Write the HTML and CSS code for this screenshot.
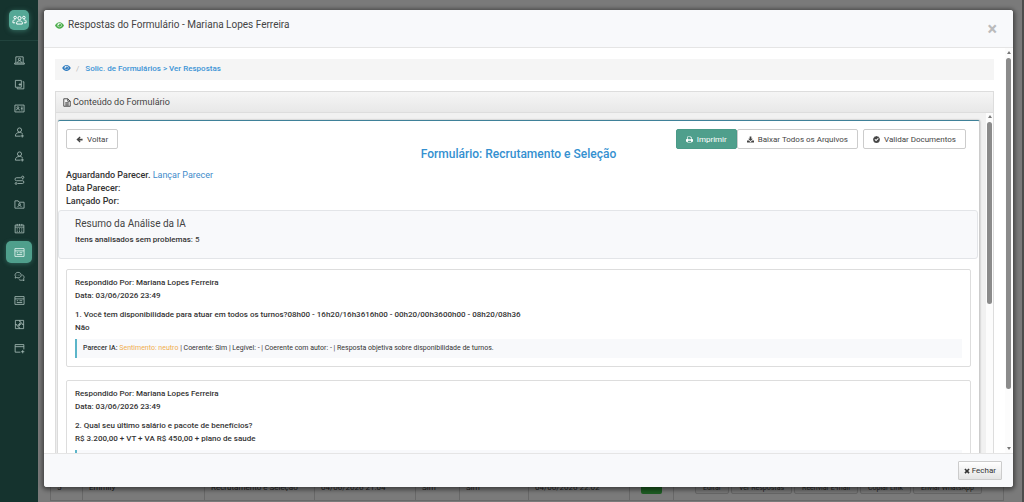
FILE: index.html
```
<!DOCTYPE html>
<html lang="pt-BR">
<head>
  <meta charset="UTF-8">
  <title>Respostas do Formulário</title>
  <link rel="stylesheet" href="styles.css">
</head>
<body>

<!-- ICON SPRITE -->
<svg class="sprite" aria-hidden="true">
  <symbol id="i-team" viewBox="0 0 24 16"><circle cx="12" cy="5" r="2.6"/><circle cx="5" cy="4" r="2"/><circle cx="19" cy="4" r="2"/><path d="M7.5 14.5v-2.2c0-1.800 1.500-2.800 4.500-2.800s4.500 1 4.500 2.800v2.200zM1.500 12.500v-2.500c0-1.500 1.300-2.300 3.800-2.300M22.500 12.500v-2.500c0-1.500-1.300-2.300-3.800-2.300M1.500 12.500h3.500M19 12.500h3.500"/></symbol>
  <symbol id="i-laptop" viewBox="0 0 24 24"><path d="M4 17V4h16v13M1.500 17.500h21V20h-21zM8 17c0-3 1.500-4.500 4-4.500s4 1.500 4 4.500"/><circle cx="12" cy="9.500" r="2.500"/></symbol>
  <symbol id="i-copy" viewBox="0 0 24 24"><path d="M3 3h13v15H3zM19 6h2.500v15.500H7V19M13 9v6M10 12h6"/></symbol>
  <symbol id="i-idcard" viewBox="0 0 24 24"><path d="M2 4.500h20v15H2zM5 16c0-2 1-3 3.500-3s3.500 1 3.500 3M15 9h4M15 12h4M15 15h4"/><circle cx="8.500" cy="10" r="2"/></symbol>
  <symbol id="i-useradd" viewBox="0 0 24 24"><circle cx="12" cy="6.500" r="4.500"/><path d="M14 20H3c0-5 3-8 9-8 3 0 5.500.8 7 3M18 16v7M14.500 19.500h7"/></symbol>
  <symbol id="i-route" viewBox="0 0 24 24"><circle cx="19" cy="5" r="2.500"/><circle cx="4.500" cy="18.500" r="2"/><path d="M15 6H5.500a3 3 0 0 0 0 6.500h13a3 3 0 0 1 0 6H8M19 8v2"/></symbol>
  <symbol id="i-folder" viewBox="0 0 24 24"><path d="M2 20V4h7l2 3h11v13zM8.500 17.500c0-2 1-3.500 3.500-3.500s3.500 1.500 3.500 3.500"/><circle cx="12" cy="11.500" r="2"/></symbol>
  <symbol id="i-calendar" viewBox="0 0 24 24"><path d="M2.500 4.500h19v17h-19zM2.500 9h19M7 2v4M12 2v4M17 2v4M6 12.500h2M11 12.500h2M16 12.500h2M6 15.500h2M11 15.500h2M16 15.500h2M6 18.500h2M11 18.500h2M16 18.500h2"/></symbol>
  <symbol id="i-form" viewBox="0 0 24 24"><path d="M2 3.500h20v17H2zM2 8.500h20M6 12.500h3M12 12.500h6M6 16.500h12"/></symbol>
  <symbol id="i-chat" viewBox="0 0 24 24"><path d="M2.500 15.500l.8-3.300C.8 8 3.500 3 9 3c9 0 9 12 0 12-1.300 0-2.400-.3-3.300-.8zM18 8.500c4 1.500 5 5.500 3 8.500l.8 4-3.800-1.200c-3 1-6 0-7.500-2M6 9h1M9 9h1M12 9h1"/></symbol>
  <symbol id="i-puzzle" viewBox="0 0 24 24"><path d="M3 3h18v18H3zM12 3v2.500c4-1.500 4 5 0 3.500v3H9.500c1.500 4-5 4-3.500 0H3M12 21v-2.500c-4 1.500-4-5 0-3.500v-3h2.500c-1.500-4 5-4 3.500 0h3"/></symbol>
  <symbol id="i-formadd" viewBox="0 0 24 24"><path d="M14 20H2.500V3.500h19V14M2.500 8h19M19 15.500v7M15.500 19h7"/></symbol>
  <symbol id="i-eye" viewBox="0 0 20 14"><path fill-rule="evenodd" d="M10 0c4.500 0 8 3.300 10 7-2 3.700-5.500 7-10 7S2 10.700 0 7C2 3.300 5.500 0 10 0zm0 1.500a4.800 4.800 0 1 0 0 9.600 4.800 4.800 0 0 0 0-9.600zM10 2.800a3.600 3.600 0 1 1-3.600 3.600c1.500.8 3.600 0 3.600-3.600z"/></symbol>
  <symbol id="i-file" viewBox="0 0 16 18"><path d="M1.500 1.500h8l5 5v10h-13zM9.500 1.500v5h5M4.500 9.500h7M4.500 12h7M4.500 14.300h7"/></symbol>
  <symbol id="i-left" viewBox="0 0 16 16"><path d="M8.500 1L10.500 3 7.800 6H15v4H7.800l2.700 3-2 2L1 8z"/></symbol>
  <symbol id="i-print" viewBox="0 0 16 16"><path fill-rule="evenodd" d="M3 1h8l2 2v4h1c1 0 2 1 2 2v4h-3v2H3v-2H0V9c0-1 1-2 2-2h1zm1.500 1.500v5h7V4H10V2.500zM4.500 11v2.700h7V11z"/></symbol>
  <symbol id="i-download" viewBox="0 0 16 16"><path d="M6 1h4v5h3.500L8 11.500 2.500 6H6zM0 10.500h4.500L8 14l3.500-3.500H16V15H0z"/></symbol>
  <symbol id="i-check" viewBox="0 0 16 16"><path fill-rule="evenodd" d="M8 0l2 1.200 2.300-.2 1 2.200 2 1.100-.2 2.300L16 8l-.9 1.800.2 2.300-2 1.100-1 2.200-2.300-.2L8 16l-2-.8-2.300.2-1-2.200-2-1.100.2-2.300L0 8l.9-1.400-.2-2.300 2-1.100 1-2.200L6 1.200zM3.500 8.300L7 12l6-6-1.600-1.600L7 8.800 5 6.800z"/></symbol>
  <symbol id="i-times" viewBox="0 0 16 16"><path d="M4 1l4 4 4-4 3 3-4 4 4 4-3 3-4-4-4 4-3-3 4-4-4-4z"/></symbol>
</svg>

<!-- SIDEBAR -->
<nav class="sidebar">
  <a class="brand" href="#" aria-label="Início"><svg><use href="#i-team"/></svg></a>
  <ul class="menu">
    <li><a href="#" aria-label="Portal"><svg><use href="#i-laptop"/></svg></a></li>
    <li><a href="#" aria-label="Cadastros"><svg><use href="#i-copy"/></svg></a></li>
    <li><a href="#" aria-label="Colaboradores"><svg><use href="#i-idcard"/></svg></a></li>
    <li><a href="#" aria-label="Admissão"><svg><use href="#i-useradd"/></svg></a></li>
    <li><a href="#" aria-label="Candidatos"><svg><use href="#i-useradd"/></svg></a></li>
    <li><a href="#" aria-label="Trajetos"><svg><use href="#i-route"/></svg></a></li>
    <li><a href="#" aria-label="Pastas"><svg><use href="#i-folder"/></svg></a></li>
    <li><a href="#" aria-label="Agenda"><svg><use href="#i-calendar"/></svg></a></li>
    <li><a class="active" href="#" aria-label="Formulários"><svg><use href="#i-form"/></svg></a></li>
    <li><a href="#" aria-label="Mensagens"><svg><use href="#i-chat"/></svg></a></li>
    <li><a href="#" aria-label="Modelos"><svg><use href="#i-form"/></svg></a></li>
    <li><a href="#" aria-label="Integrações"><svg><use href="#i-puzzle"/></svg></a></li>
    <li><a href="#" aria-label="Novo formulário"><svg><use href="#i-formadd"/></svg></a></li>
  </ul>
</nav>

<!-- PAGE BEHIND THE MODAL -->
<main class="page">
  <table class="requests">
    <colgroup>
      <col class="c-id"><col class="c-name"><col class="c-form"><col class="c-date"><col class="c-flag"><col class="c-sent"><col class="c-date"><col class="c-flag"><col>
    </colgroup>
    <tr>
      <td>5</td>
      <td>Emmily</td>
      <td>Recrutamento e Seleção</td>
      <td>04/06/2026 21:04</td>
      <td>Sim</td>
      <td>Sim</td>
      <td>04/06/2026 22:02</td>
      <td><span class="tag">Sim</span></td>
      <td class="actions"><button>Editar</button> <button>Ver Respostas</button> <button>Reenviar E-mail</button> <button>Copiar Link</button> <button>Enviar WhatsApp</button></td>
    </tr>
  </table>
</main>

<!-- MODAL -->
<div class="modal" role="dialog" aria-labelledby="modal-title">
  <div class="modal-header">
    <h4 id="modal-title"><svg class="eye"><use href="#i-eye"/></svg>Respostas do Formulário - Mariana Lopes Ferreira</h4>
    <button class="close" aria-label="Fechar janela">×</button>
  </div>

  <div class="modal-body">
    <div class="modal-content">
      <div class="breadcrumb">
        <svg class="eye"><use href="#i-eye"/></svg>
        <span class="sep">/</span>
        <a href="#">Solic. de Formulários &gt; Ver Respostas</a>
      </div>

      <section class="panel">
        <h5 class="panel-title"><svg><use href="#i-file"/></svg>Conteúdo do Formulário</h5>
        <div class="panel-body">
          <div class="sheet">
            <div class="toolbar">
              <button class="btn"><svg><use href="#i-left"/></svg>Voltar</button>
              <span class="spacer"></span>
              <button class="btn primary"><svg><use href="#i-print"/></svg>Imprimir</button>
              <button class="btn"><svg><use href="#i-download"/></svg>Baixar Todos os Arquivos</button>
              <button class="btn last"><svg><use href="#i-check"/></svg>Validar Documentos</button>
            </div>
            <h3 class="form-title">Formulário: Recrutamento e Seleção</h3>

            <div class="status">
              <div><strong>Aguardando Parecer.</strong> <a href="#">Lançar Parecer</a></div>
              <div><strong>Data Parecer:</strong></div>
              <div><strong>Lançado Por:</strong></div>
            </div>

            <div class="summary">
              <h4>Resumo da Análise da IA</h4>
              <p><strong>Itens analisados sem problemas:</strong> 5</p>
            </div>

            <!-- ANSWERS -->
            <article class="answer">
              <p>Respondido Por: Mariana Lopes Ferreira</p>
              <p>Data: 03/06/2026 23:49</p>
              <p class="question">1. Você tem disponibilidade para atuar em todos os turnos?08h00 - 16h20/16h3616h00 - 00h20/00h3600h00 - 08h20/08h36</p>
              <p>Não</p>
              <div class="opinion"><strong>Parecer IA:</strong> <span class="neutral">Sentimento: neutro</span> | Coerente: Sim | Legível: - | Coerente com autor: - | Resposta objetiva sobre disponibilidade de turnos.</div>
            </article>
            <article class="answer">
              <p>Respondido Por: Mariana Lopes Ferreira</p>
              <p>Data: 03/06/2026 23:49</p>
              <p class="question">2. Qual seu último salário e pacote de benefícios?</p>
              <p>R$ 3.200,00 + VT + VA R$ 450,00 + plano de saude</p>
              <div class="opinion"></div>
            </article>
          </div>
          <div class="scroll inner"><i class="up"></i><i class="thumb"></i></div>
        </div>
      </section>
    </div>
    <div class="scroll outer"><i class="up"></i><i class="thumb"></i><i class="down"></i></div>
  </div>

  <div class="modal-footer">
    <button class="btn-close"><svg><use href="#i-times"/></svg>Fechar</button>
  </div>
</div>

</body>
</html>
```

FILE: styles.css
```
/* --- Global Styles --- */
* { box-sizing: border-box; }
body {
  margin: 0;
  height: 100vh;
  display: flex;
  overflow: hidden;
  background: #7a7a7a;
  color: #333;
  font: 8px/13px Roboto, sans-serif;
}
h3, h4, h5, p, ul { margin: 0; padding: 0; font-weight: 400; }
button { font-family: inherit; cursor: pointer; }
a { text-decoration: none; color: #428bca; }
strong { font-weight: 500; }
svg { fill: currentColor; flex: none; }
.sprite { display: none; }

/* --- Sidebar --- */
.sidebar {
  width: 38px;
  background: #15332e;
  flex: none;
}
.brand {
  display: flex;
  align-items: center;
  justify-content: center;
  width: 20px;
  height: 20px;
  margin: 10px auto;
  border-radius: 5px;
  background: #55a896;
  color: #fff;
  box-shadow: 0 1px 5px rgba(85, 168, 150, 0.5);
}
.brand svg { width: 15px; height: 10px; fill: none; stroke: currentColor; stroke-width: 1.6; }
.menu {
  list-style: none;
  border-top: 1px solid #21433d;
  padding-top: 8px;
}
.menu a {
  display: flex;
  align-items: center;
  justify-content: center;
  width: 26px;
  height: 22px;
  margin: 0 auto 2px;
  border-radius: 5px;
  color: #a9bdb8;
}
.menu a.active { background: #4f9f8c; color: #e8f5f2; box-shadow: 0 1px 4px rgba(85, 168, 150, 0.4); }
.menu svg { width: 11px; height: 11px; fill: none; stroke: currentColor; stroke-width: 1.8; }

/* --- Page behind the modal --- */
.page {
  flex: 1;
  display: flex;
  align-items: flex-end;
  padding: 0 18px 1px 12px;
  border-right: 2px solid #4c4c4c;
}
.requests {
  width: 100%;
  table-layout: fixed;
  border-collapse: collapse;
  color: #222;
}
.requests td {
  height: 26px;
  padding: 0 6px;
  border: 1px solid #686868;
  white-space: nowrap;
}
.c-id { width: 32px; }
.c-name { width: 122px; }
.c-form { width: 110px; }
.c-date { width: 101px; }
.c-flag { width: 44px; }
.c-sent { width: 69px; }
.tag { display: block; width: 21px; margin: auto; border-radius: 2px; background: #1d5c22; color: #1d5c22; }
.requests .actions { text-align: center; }
.actions button {
  padding: 1px 7px;
  border: 1px solid #666;
  border-radius: 2px;
  background: #777;
  color: #222;
  font-size: 7px;
}

/* --- Modal --- */
.modal {
  position: absolute;
  top: 10px;
  right: 11px;
  bottom: 15px;
  left: 44px;
  display: flex;
  flex-direction: column;
  border-radius: 3px;
  background: #fff;
  box-shadow: 0 1px 4px 2px rgba(0, 0, 0, 0.45);
  overflow: hidden;
}
.modal-header {
  display: flex;
  align-items: flex-start;
  justify-content: space-between;
  height: 38px;
  padding: 8px 16px 0 11px;
  border-bottom: 1px solid #e5e5e5;
  background: #f8f9fb;
  flex: none;
}
.modal-header h4 { display: flex; align-items: center; gap: 4px; font-size: 10px; line-height: 14px; color: #444; }
.modal-header .eye { width: 9px; height: 7px; color: #4cae4c; }
.close {
  margin-top: 2px;
  padding: 0;
  border: 0;
  background: none;
  color: #bbb;
  font-size: 18px;
  font-weight: 700;
  line-height: 18px;
}
.modal-body { display: flex; flex: 1; min-height: 0; }
.modal-content { flex: 1; min-width: 0; padding: 11px 11px 0 11px; overflow: hidden; }
.modal-footer {
  display: flex;
  align-items: center;
  justify-content: flex-end;
  height: 34px;
  padding-right: 11px;
  border-top: 1px solid #e5e5e5;
  background: #f8f9fb;
  flex: none;
}
.btn-close {
  display: flex;
  align-items: center;
  gap: 2px;
  height: 19px;
  padding: 0 5px;
  border: 1px solid #ccc;
  border-radius: 1px;
  background: linear-gradient(#fff, #e4e4e4);
  color: #333;
  font-size: 8px;
}
.btn-close svg { width: 6px; height: 6px; }

/* --- Breadcrumb --- */
.breadcrumb {
  display: flex;
  align-items: center;
  height: 21px;
  padding: 0 7px 3px;
  background: #f5f5f5;
  font-size: 8px;
  font-weight: 500;
}
.breadcrumb a { color: #3c94d6; }
.breadcrumb .eye { width: 9px; height: 6px; color: #2f7cc0; }
.sep { margin: 0 6px 0 5px; color: #bbb; font-weight: 400; }

/* --- Panel --- */
.panel { margin-top: 11px; border: 1px solid #ddd; border-bottom: 0; }
.panel-title {
  display: flex;
  align-items: center;
  gap: 2px;
  height: 21px;
  padding-left: 7px;
  border-bottom: 1px solid #ddd;
  background: linear-gradient(#f5f5f5, #e8e8e8);
  color: #444;
  font-size: 9px;
}
.panel-title svg { width: 8px; height: 9px; fill: none; stroke: currentColor; stroke-width: 1.8; }
.panel-body { display: flex; align-items: flex-start; padding-left: 2px; background: #f1f1f1; }

.sheet {
  flex: 1;
  min-width: 0;
  margin-top: 7px;
  padding-top: 8px;
  border-top: 1px solid #3f8199;
  border-right: 1px solid #ccc;
  border-radius: 2px;
  background: #fff;
  box-shadow: 0 0 2px rgba(0, 0, 0, 0.35);
}
.toolbar { display: flex; padding: 0 13px 0 8px; }
.spacer { flex: 1; }
.btn {
  display: flex;
  align-items: center;
  gap: 4px;
  height: 20px;
  padding: 0 9px;
  border: 1px solid #ccc;
  border-radius: 2px;
  background: #fff;
  color: #444;
  font-size: 8px;
}
.btn svg { width: 7px; height: 7px; }
.btn.primary { border-color: #4a9a88; background: #4f9f8c; color: #fff; }
.btn.last { margin-left: 5px; }
.form-title {
  margin: -2px 0 8px;
  text-align: center;
  color: #3490d0;
  font-size: 12px;
  font-weight: 500;
  line-height: 14px;
}
.status { padding-left: 8px; font-size: 9px; }

.summary {
  height: 49px;
  margin: 2px 1px 10px 0;
  padding: 6px 16px;
  border: 1px solid #e3e5e8;
  border-radius: 3px;
  background: #f8f9fb;
}
.summary h4 { margin-bottom: 2px; color: #444; font-size: 10px; line-height: 14px; }

/* --- Answers --- */
.answer {
  margin: 0 8px 13px;
  padding: 6px 8px 8px;
  border: 1px solid #ddd;
  border-radius: 2px;
}
.answer p { font-weight: 500; }
.answer .question { margin-top: 6px; }
.opinion {
  height: 19px;
  margin-top: 5px;
  padding: 3px 6px;
  border-left: 2px solid #5bb5c9;
  background: #f8f9fb;
  font-size: 7px;
}
.opinion .neutral { color: #f0ad4e; }

/* --- Scrollbars --- */
.scroll {
  display: flex;
  flex-direction: column;
  align-items: center;
  gap: 4px;
  width: 7px;
  background: #fcfcfc;
  flex: none;
}
.scroll .thumb { width: 5px; border-radius: 3px; background: #8b8b8b; }
.scroll .up { border: 2px solid transparent; border-top: 0; border-bottom: 3px solid #777; }
.scroll .down { margin-top: auto; border: 2px solid transparent; border-bottom: 0; border-top: 3px solid #777; }
.outer { margin-right: 1px; padding: 3px 0; }
.outer .thumb { height: 83%; }
.inner { align-self: stretch; margin-left: 6px; padding-top: 2px; }
.inner .thumb { height: 182px; }
```
